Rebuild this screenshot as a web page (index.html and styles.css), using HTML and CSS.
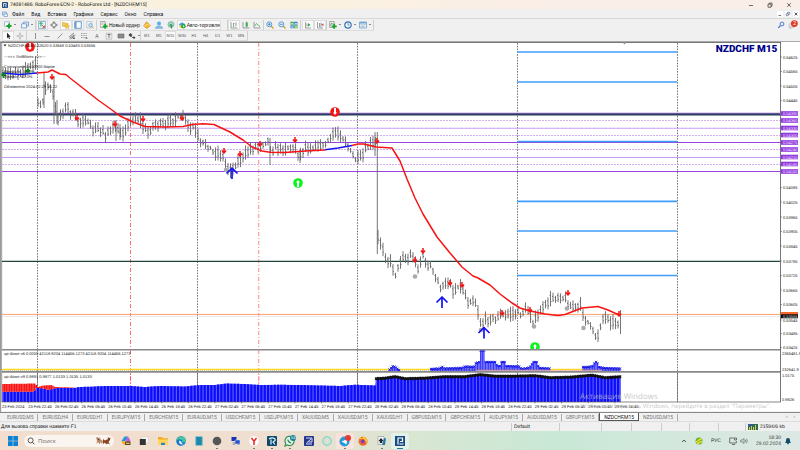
FILE: index.html
```html
<!DOCTYPE html>
<html lang="ru">
<head>
<meta charset="utf-8">
<title>NZDCHF,M15</title>
<link rel="stylesheet" href="styles.css">
</head>
<body>
<header class="title-bar">
  <svg class="i8" viewBox="0 0 8 8"><rect width="8" height="8" rx="1" fill="#1d4f86"/><path d="M2 6.5V2h3.6v2.4H3.6" fill="none" stroke="#fff"/><path d="M4 6.3h2.5" stroke="#fff" stroke-width=".8"/></svg>
  <span class="title-text">74081486: RoboForex-ECN-2 - RoboForex Ltd - [NZDCHF,M15]</span>
  <div class="window-buttons">
    <button aria-label="Свернуть"><svg class="i6" viewBox="0 0 6 6"><path d="M1 3.5h4" stroke="#333" stroke-width=".7"/></svg></button>
    <button aria-label="Восстановить"><svg class="i6" viewBox="0 0 6 6"><path d="M1 2.2h3v3H1zM2.2 2V1H5v3.2H4.200" fill="none" stroke="#333" stroke-width=".7"/></svg></button>
    <button aria-label="Закрыть"><svg class="i6" viewBox="0 0 6 6"><path d="M1.200 1.200l3.600 3.600M4.800 1.200L1.200 4.800" stroke="#333" stroke-width=".7"/></svg></button>
  </div>
</header>
<nav class="menu-bar">
  <svg class="i6" viewBox="0 0 6 6"><path d="M.5 1h4v3h-4z" fill="#cfe3f7" stroke="#4d86bf" stroke-width=".6"/><path d="M2 3h3.500v2.500H2z" fill="#fff" stroke="#4d86bf" stroke-width=".6"/></svg>
  <button>Файл</button><button>Вид</button><button>Вставка</button><button>Графики</button><button>Сервис</button><button>Окно</button><button>Справка</button>
  <div class="child-buttons">
    <button aria-label="Свернуть график"><svg class="i6" viewBox="0 0 6 6"><path d="M1.500 4.500h2.500" stroke="#555" stroke-width=".8"/></svg></button>
    <button aria-label="Восстановить график"><svg class="i6" viewBox="0 0 6 6"><path d="M1.300 2.700h2v2h-2zM2.500 2.500V1.300h2.300v2H3.500" fill="none" stroke="#5a6b85" stroke-width=".7"/></svg></button>
    <button aria-label="Закрыть график"><svg class="i6" viewBox="0 0 6 6"><path d="M1.600 1.600l2.800 2.800M4.400 1.600L1.600 4.400" stroke="#445" stroke-width=".9"/></svg></button>
  </div>
</nav>
<div class="toolbar toolbar-main">
  <div class="group g-files">
    <button aria-label="Новый график"><svg class="i8" viewBox="0 0 8 8"><path d="M.5.8h5v4.500h-5z" fill="#fff" stroke="#6d8fae" stroke-width=".6"/><path d="M5 2.500v5M2.500 5h5" stroke="#16a52a" stroke-width="1.900"/></svg><i></i></button>
    <button aria-label="Профили"><svg class="i8" viewBox="0 0 8 8"><path d="M2.500 1h5v4h-5z" fill="#d9e9f8" stroke="#5b8cbd" stroke-width=".7"/><path d="M.5 2.800h5V7h-5z" fill="#eef6fd" stroke="#5b8cbd" stroke-width=".7"/></svg><i></i></button>
  </div>
  <div class="group g-panels">
    <button class="on" aria-label="Обзор рынка"><svg class="i8" viewBox="0 0 8 8"><path d="M.5.5h7v7h-7z" fill="#e2f0fa" stroke="#6ba3ca" stroke-width=".7"/><path d="M3 1.500v4M1.500 3L3 1.500 4.500 3" fill="none" stroke="#1ba33a" stroke-width="1"/><path d="M4 4l2.500 2.500M6.500 4.500v2h-2" fill="none" stroke="#e0562d" stroke-width=".9"/></svg></button>
    <button aria-label="Окно данных"><svg class="i8" viewBox="0 0 8 8"><circle cx="4" cy="4" r="2.300" fill="none" stroke="#777" stroke-width=".8"/><path d="M4 .3v2.500M4 5.200v2.500M.3 4h2.500M5.200 4h2.500" stroke="#555" stroke-width=".8"/></svg></button>
    <button class="on" aria-label="Навигатор"><svg class="i8" viewBox="0 0 8 8"><path d="M.5 1.500h2l.7.8h2.600v3H.5z" fill="#f5cf57" stroke="#c99522" stroke-width=".5"/><path d="M5.200 3l.8 1.500 1.700.3-1.200 1.200.2 1.600-1.500-.8-1.500.8.2-1.600-1.200-1.200 1.700-.3z" fill="#ffd640" stroke="#c08c1c" stroke-width=".4"/></svg></button>
    <button class="on" aria-label="Терминал"><svg class="i8" viewBox="0 0 8 8"><path d="M.7.700h6.600v6.600H.7z" fill="#f8fbff" stroke="#4a87bd" stroke-width=".8"/><path d="M1 1h1.500v6H1z" fill="#62a0d8"/></svg></button>
    <button aria-label="Тестер стратегий"><svg class="i8" viewBox="0 0 8 8"><path d="M.7.500h5v6.500h-5z" fill="#eef4f8" stroke="#8fa9bb" stroke-width=".5"/><circle cx="4.500" cy="4.200" r="1.700" fill="#cfe5f6" stroke="#5588b0" stroke-width=".6"/><path d="M5.800 5.600l1.700 1.800" stroke="#d29a2a" stroke-width="1"/></svg></button>
  </div>
  <div class="group g-order">
    <button class="labelled"><svg class="i8" viewBox="0 0 8 8"><path d="M.7.500h4.500v6h-4.500z" fill="#fff" stroke="#777" stroke-width=".6"/><path d="M1.500 2h3M1.500 3.300h2" stroke="#777" stroke-width=".5"/><path d="M5.200 2.800v5M2.700 5.300h5" stroke="#16a52a" stroke-width="1.800"/></svg>Новый ордер</button>
    <button aria-label="Редактор"><svg class="i8" viewBox="0 0 8 8"><path d="M3.500.800l4 3.700-3.500 3L.500 5z" fill="#f4b92b" stroke="#b87e15" stroke-width=".5"/><path d="M1 5l3.500-1.500L7 4.500" stroke="#fde7a0" stroke-width=".7" fill="none"/></svg></button>
    <button aria-label="Сообщество"><svg class="i8" viewBox="0 0 8 8"><circle cx="4" cy="2.500" r="2" fill="#58aee6"/><path d="M.5 7.300c0-3 7-3 7 0z" fill="#8dc6ec" stroke="#3c86bd" stroke-width=".5"/></svg></button>
    <button aria-label="Сигналы"><svg class="i8" viewBox="0 0 8 8"><circle cx="4" cy="3.500" r="3" fill="#a9d8cb" stroke="#5fa894" stroke-width=".6"/><circle cx="4" cy="4.300" r="1.500" fill="#44a768"/><path d="M4.500 5v2.500" stroke="#359055"/></svg></button>
    <button class="labelled on"><svg class="i8" viewBox="0 0 8 8"><path d="M.5 3.500L4 1.200l3.500 2L4 5z" fill="#4c9ed8"/><path d="M1.500 4v2L4 7.500V5z" fill="#e6b92d"/><circle cx="5.500" cy="5.300" r="2.200" fill="#1ca638"/><path d="M5 4.200v2.200l1.700-1.100z" fill="#fff"/></svg>Авто-торговля</button>
  </div>
  <div class="group g-charts">
    <button class="on" aria-label="Бары"><svg class="i8" viewBox="0 0 8 8"><path d="M1 1v6h6.500M3.500 2v4M3.500 2.500h1M6 1.500V5M5.500 5H6" fill="none" stroke="#6f8a75" stroke-width=".8"/></svg></button>
    <button aria-label="Свечи"><svg class="i8" viewBox="0 0 8 8"><path d="M1 1v6h6.500M4.700.5v6" fill="none" stroke="#777" stroke-width=".7"/><path d="M3.700 1.500h2v4h-2z" fill="#28b34a"/></svg></button>
    <button aria-label="Линия"><svg class="i8" viewBox="0 0 8 8"><path d="M1 1v6h6.500" fill="none" stroke="#777" stroke-width=".7"/><path d="M1.500 5l2-2.500 2 2 1.500 1" fill="none" stroke="#34ac50" stroke-width=".8"/></svg></button>
  </div>
  <div class="group g-zoom">
    <button aria-label="Приблизить"><svg class="i8" viewBox="0 0 8 8"><path d="M4.800 4.800l2.700 2.700" stroke="#d2a02e" stroke-width="1.400"/><circle cx="3.300" cy="3.300" r="2.500" fill="#e2f2ff" stroke="#3f86c5" stroke-width=".8"/><path d="M2 3.300h2.600M3.300 2v2.600" stroke="#2572ba" stroke-width=".8"/></svg></button>
    <button aria-label="Отдалить"><svg class="i8" viewBox="0 0 8 8"><path d="M4.800 4.800l2.700 2.700" stroke="#d2a02e" stroke-width="1.400"/><circle cx="3.300" cy="3.300" r="2.500" fill="#e2f2ff" stroke="#3f86c5" stroke-width=".8"/><path d="M2 3.300h2.600" stroke="#2572ba" stroke-width=".8"/></svg></button>
    <button aria-label="Окна плиткой"><svg class="i8" viewBox="0 0 8 8"><path d="M.5.800h3.300v3H.5zM4.200 4.200h3.300v3H4.200z" fill="#39a84a"/><path d="M4.200.800h3.300v3H4.200zM.5 4.200h3.300v3H.5z" fill="#3978c8"/><path d="M1.200 2.300h2v1h-2zM5 2.300h2v1H5zM1.200 5.600h2v1h-2zM5 5.600h2v1H5z" fill="#fff"/></svg></button>
  </div>
  <div class="group g-scroll">
    <button class="on" aria-label="Автопрокрутка"><svg class="i8" viewBox="0 0 8 8"><path d="M1.500 1v6H7M3 2.500v3" fill="none" stroke="#777" stroke-width=".7"/><path d="M4 2v3.500L6.500 4z" fill="#23ad42"/></svg></button>
    <button class="on" aria-label="Сдвиг графика"><svg class="i8" viewBox="0 0 8 8"><path d="M1.500 1v6H7M3.500 2v4" fill="none" stroke="#777" stroke-width=".7"/><path d="M5 1.500v5" stroke="#4b7ba8" stroke-width=".7"/><path d="M7.500 2.300v3L5.200 3.800z" fill="#d0562e"/></svg></button>
  </div>
  <div class="group g-tools">
    <button aria-label="Индикаторы"><svg class="i8" viewBox="0 0 8 8"><path d="M.7.500h4.500v6h-4.500z" fill="#e7f2e4" stroke="#777" stroke-width=".6"/><path d="M1.200 5l1.500-3 1 1.500" fill="none" stroke="#555" stroke-width=".6"/><path d="M5.200 2.800v5M2.700 5.300h5" stroke="#16a52a" stroke-width="1.800"/></svg><i></i></button>
    <button aria-label="Периоды"><svg class="i8" viewBox="0 0 8 8"><circle cx="4" cy="4" r="3.200" fill="#f4faff" stroke="#2f74b8" stroke-width="1.200"/><path d="M4 2v2.200h1.500" fill="none" stroke="#444" stroke-width=".6"/></svg><i></i></button>
    <button aria-label="Шаблоны"><svg class="i8" viewBox="0 0 8 8"><path d="M.5 1h7v6h-7z" fill="#e5f0fa" stroke="#6a96bd" stroke-width=".7"/><path d="M.5 1h7v1.500h-7z" fill="#6fa5d2"/><path d="M1.500 4l1-.7 1.500 1 2.500-1M1.500 5.700h4" fill="none" stroke="#7f9db5" stroke-width=".6"/></svg><i></i></button>
  </div>
  <div class="toolbar-right">
    <button aria-label="Поиск по сайту"><svg class="i8" viewBox="0 0 8 8"><circle cx="5" cy="3" r="1.900" fill="none" stroke="#3c6fd0" stroke-width=".9"/><path d="M3.500 4.500L1.300 6.800" stroke="#3c6fd0" stroke-width="1.100"/></svg></button>
    <button aria-label="Уведомления" class="notice"><svg class="i10" viewBox="0 0 10 10"><path d="M1 5c0-3 5-3 5 0v2.500H3.500L2.500 9V7.500H1z" fill="#ddd" stroke="#aaa" stroke-width=".5"/><circle cx="6.400" cy="3.600" r="3.400" fill="#e13a20"/><text x="5.300" y="5.400" fill="#fff" font-size="5">2</text></svg></button>
  </div>
</div>
<div class="toolbar toolbar-draw">
  <div class="group g-cursor">
    <button class="on" aria-label="Курсор"><svg class="i8" viewBox="0 0 8 8"><path d="M3 .8v5.400l1.300-1.100.8 2 .9-.4-.8-1.900h1.500z" fill="#222"/></svg></button>
    <button aria-label="Перекрестие"><svg class="i8" viewBox="0 0 8 8"><path d="M4 .7v2.600M4 4.700v2.600M.7 4h2.600M4.700 4h2.600" stroke="#777" stroke-width=".7"/></svg></button>
  </div>
  <div class="group g-draw">
    <button aria-label="Вертикальная линия"><svg class="i8" viewBox="0 0 8 8"><path d="M4.500 1v6" stroke="#666" stroke-width=".7"/></svg></button>
    <button aria-label="Горизонтальная линия"><svg class="i8" viewBox="0 0 8 8"><path d="M1.500 4.500h5" stroke="#666" stroke-width=".7"/></svg></button>
    <button aria-label="Трендовая линия"><svg class="i8" viewBox="0 0 8 8"><path d="M1.500 6.500l5-5" stroke="#666" stroke-width=".7"/></svg></button>
    <button aria-label="Канал"><svg class="i8" viewBox="0 0 8 8"><path d="M1 5l5-4M2.500 7l5-4M1.500 6.500L6 3" stroke="#666" stroke-width=".8"/><path d="M4.800 5.500h2v1.500h-2z" fill="#555"/></svg></button>
    <button aria-label="Фибоначчи"><svg class="i8" viewBox="0 0 8 8"><path d="M1 1.500h6M1 3.500h6M1 5.500h4" stroke="#777" stroke-width=".7" stroke-dasharray="1 .6"/><path d="M5.500 5h1.800v2H5.500z" fill="#888"/></svg></button>
    <button>A</button>
    <button aria-label="Метка"><svg class="i8" viewBox="0 0 8 8"><path d="M1.200 1.200h5.600v6H1.200z" fill="none" stroke="#888" stroke-width=".6" stroke-dasharray="1 .5"/><path d="M2.500 2.500h3M4 2.500V6" stroke="#555" stroke-width=".8"/></svg></button>
    <button aria-label="Прямоугольник"><svg class="i8" viewBox="0 0 8 8"><path d="M1 2h6v4H1z" fill="#8b8b8b" stroke="#666" stroke-width=".6"/></svg></button>
    <button aria-label="Стрелки"><svg class="i8" viewBox="0 0 8 8"><path d="M.5 3l2-2 2 2-2 2zM4.500 5.500l1.500-1.300 1.500 1.300L6 7z" fill="#444"/><path d="M3 4l2 2" stroke="#444" stroke-width=".7"/></svg><i></i></button>
  </div>
  <div class="group g-periods">
    <button>M1</button><button>M5</button><button class="on">M15</button><button>M30</button><button>H1</button><button>H4</button><button>D1</button><button>W1</button><button>MN</button>
  </div>
</div>
<main class="chart-window">
  <svg id="chart" class="chart" viewBox="0 42 800 370" role="img" aria-label="NZDCHF M15"></svg>
</main>
<nav class="chart-tabs">
  <button>EURUSD,M5</button><button>EURUSD,H4</button><button>EURUSD,H1</button><button>EURJPY,M15</button><button>EURCHF,M15</button><button>EURAUD,M15</button><button>USDCHF,M15</button><button>USDJPY,M15</button><button>XAUUSD,M5</button><button>XAUUSD,M15</button><button>XAUUSD,H1</button><button>GBPUSD,M15</button><button>GBPCHF,M15</button><button>AUDJPY,M15</button><button>AUDUSD,M15</button><button>GBPJPY,M15</button><button class="active">NZDCHF,M15</button><button>NZDUSD,M15</button>
  <span class="tab-scroll"><b>‹</b><b>›</b></span>
</nav>
<footer class="status-bar">
  <span class="hint">Для вызова справки нажмите F1</span>
  <div class="status-cells"><span>Default</span><span></span><span></span><span></span><span></span><span></span><span></span>
  <span class="traffic"><svg class="i10" viewBox="0 0 10 6"><path d="M0 0h10v6H0z" fill="#2e6b4a"/><path d="M0 0h5v3H0z" fill="#315c96"/><path d="M1 6V3h1v3zM3 6V2h1v4zM5 6V3h1v3zM7 6V1h1v5z" fill="#d4cf55"/></svg>21594/6 kb</span></div>
</footer>
<footer class="taskbar">
  <button class="start" aria-label="Пуск"><svg class="i10" viewBox="0 0 10 10"><path d="M0 0h4.700v4.700H0zM5.300 0H10v4.700H5.300zM0 5.300h4.700V10H0zM5.300 5.300H10V10H5.300z" fill="#0b83d4"/></svg></button>
  <label class="search"><svg class="i8" viewBox="0 0 8 8"><circle cx="3.600" cy="3.400" r="2.500" fill="none" stroke="#333" stroke-width=".8"/><path d="M5.500 5.300L7.300 7.200" stroke="#333" stroke-width=".9"/></svg><input type="text" placeholder="Поиск" aria-label="Поиск">
    <svg class="pets" viewBox="0 0 16 9"><path d="M1 2l1-1 1.500 1L5 1.500l.5 2L8 5l-1 3-1.500-2-1 2.500L3 6 1.500 8 2 4z" fill="#b98a6b"/><path d="M8 3l2 1.500L13 3l-.3-2L14 2l1.500-.5L15 4l-1.500 2L15 8.500l-2-1-2 .8-1-1.800L8 8V5z" fill="#8a4320"/><circle cx="3.500" cy="3.500" r=".7" fill="#56331f"/><circle cx="14" cy="3" r=".5" fill="#222"/></svg></label>
  <div class="apps">
    <button aria-label="Copilot"><svg class="i10" viewBox="0 0 10 10"><path d="M3.500.5h3.500L5.500 4 2 6.500.5 5z" fill="#2f8fe0"/><path d="M7 .5l2.500 4L7 8 5 5z" fill="#c65ad3"/><path d="M.5 5H4l1 3.500H2z" fill="#f0b429"/><path d="M4 5.500h5.500V9H4z" fill="#5d461a"/><path d="M5 7.300h3.600" stroke="#ffe18a"/></svg></button>
    <button aria-label="Представление задач"><svg class="i10" viewBox="0 0 10 10"><path d="M3 1h6.500v6H3z" fill="#f7f7f7" stroke="#bbb" stroke-width=".3"/><path d="M.8 3h6v6h-6z" fill="#333"/></svg></button>
    <button aria-label="Проводник"><svg class="i10" viewBox="0 0 10 10"><path d="M0 1h4l1 1.200h5v6.300H0z" fill="#f2ae23"/><path d="M0 3.500h10V9H0z" fill="#ffd65a"/><path d="M3 6.800h4V9H3z" fill="#3183c8"/></svg></button>
    <button aria-label="Edge"><svg class="i10" viewBox="0 0 10 10"><circle cx="5" cy="5" r="4.800" fill="#1478ca"/><path d="M.4 4C2-1 9.500-.5 9.800 5c0 2-3 2-3.500.8C7 3.500 2.500 2 .4 5z" fill="#47c89c"/><path d="M3.500 4.500C2 7.500 5 9.200 8.500 8c-2 .2-3.500-1-3-2.300z" fill="#e8f6fb"/></svg></button>
    <button aria-label="Блокнот"><svg class="i10" viewBox="0 0 10 10"><path d="M1.500.500h7v9h-7z" fill="#2aa7c7"/><path d="M2.500 2h5M2.500 4h5M2.500 6h5M2.500 8h5" stroke="#114e75" stroke-width=".7"/></svg></button>
    <button aria-label="Приложение" class="run"><svg class="i10" viewBox="0 0 10 10"><circle cx="5" cy="5" r="4.300" fill="#555"/></svg></button>
    <button aria-label="Удалённый доступ"><svg class="i10" viewBox="0 0 10 10"><path d="M.5 1h5v4h-5z" fill="#1535b8"/><path d="M4 4h5v4H4z" fill="#2552d5" stroke="#d5ddef" stroke-width=".5"/><path d="M2 6.500h2v2H2zM6 8.500h3" stroke="#999" fill="#bbb" stroke-width=".6"/></svg></button>
    <button aria-label="Яндекс" class="run"><svg class="i10" viewBox="0 0 10 10"><circle cx="5" cy="5" r="4.800" fill="#fff"/><path d="M2.500 2L5 5.200 7.500 2M5 5v4" fill="none" stroke="#ef2525" stroke-width="1.500"/></svg></button>
    <button aria-label="R" class="run"><svg class="i10" viewBox="0 0 10 10"><rect width="10" height="10" rx="1" fill="#0b496e"/><path d="M2 3c3-2 7-1 6 1.500L6 6l2 2.500M4 3.500v5" fill="none" stroke="#e6f4fa" stroke-width="1.200"/></svg></button>
    <button aria-label="WhatsApp" class="run"><svg class="i12" viewBox="0 0 12 12"><path d="M1 11l.8-2.500A4.600 4.600 0 1 1 3.500 10z" fill="#e6f5e9" stroke="#3e8d5b" stroke-width="1.200"/><path d="M3.700 4.500c.5 2 1.800 3.200 3.500 3.500" fill="none" stroke="#3e8d5b" stroke-width="1.200"/><circle cx="9" cy="3" r="3" fill="#168393"/><text x="7" y="4.300" fill="#fff" font-size="4">54</text></svg></button>
    <button aria-label="Терминал"><svg class="i10" viewBox="0 0 10 10"><rect width="10" height="10" rx="1" fill="#27348c"/><path d="M2 2h6v4H4.500M2 8h6M2.500 7L7 3" fill="none" stroke="#d7def6" stroke-width="1"/></svg></button>
    <button aria-label="Браузер"><svg class="i10" viewBox="0 0 10 10"><ellipse cx="5" cy="5" rx="4.200" ry="4.300" fill="none" stroke="#5fd0cd" stroke-width="1"/><ellipse cx="5" cy="5" rx="2" ry="3.300" fill="none" stroke="#9fe2db" stroke-width=".6"/></svg></button>
    <button aria-label="Telegram" class="alert run"><svg class="i12" viewBox="0 0 12 12"><circle cx="5.500" cy="6.500" r="5" fill="#229bd8"/><path d="M2.500 6.500L8.500 4 7.300 9.500 5.300 8z" fill="#fff"/><circle cx="9" cy="3" r="3" fill="#e83a32"/></svg></button>
    <button aria-label="Firefox"><svg class="i10" viewBox="0 0 10 10"><circle cx="5" cy="5.300" r="4.500" fill="#f36b28"/><path d="M1 3l1-2 1.500 1.500L6 .5c3 1.500 4 5 2.500 6.500L6 3z" fill="#ffc52e"/><circle cx="4.800" cy="5.500" r="2" fill="#813dc0"/></svg></button>
    <button aria-label="Пасьянс" class="run"><svg class="i10" viewBox="0 0 10 10"><path d="M1 .5h6v8H1z" fill="#f7f7f7" stroke="#71818b" stroke-width=".5"/><path d="M4 2l2.500 3-1.800.6.8 1.400h-3l.8-1.400L1.500 5z" fill="#222"/><path d="M7 2l2 .5L8 9H5z" fill="#287aaa"/></svg></button>
    <button aria-label="RoboForex" class="current"><svg class="i10" viewBox="0 0 10 10"><rect width="10" height="10" fill="#164c7f"/><path d="M3 8.500V2h4.500v3.500H5M4.500 8h4" fill="none" stroke="#fff" stroke-width="1.200"/></svg></button>
  </div>
  <div class="tray">
    <svg class="i6" viewBox="0 0 6 6"><path d="M1 4l2-2 2 2" fill="none" stroke="#333" stroke-width=".8"/></svg>
    <svg class="i8" viewBox="0 0 8 8"><circle cx="4" cy="4" r="3.500" fill="#65b530"/><path d="M1 5c2 0 2-3 5.500-3M2 6.500c3 0 2-2 5-2" fill="none" stroke="#f9df31" stroke-width="1.300"/></svg>
    <span>РУС</span>
    <div class="devices"><svg class="i8" viewBox="0 0 8 8"><path d="M7.300 4v2H.7V1H5M3 7.500h3M5.500 1h2v2h-2z" fill="none" stroke="#444" stroke-width=".7"/></svg><svg class="i8" viewBox="0 0 8 8"><path d="M.7 3h1.500L4 1.500v5L2.200 5H.7zM5.200 2.800q1 1.200 0 2.400M6.500 1.800q1.600 2.200 0 4.400" fill="none" stroke="#555" stroke-width=".6"/></svg></div>
    <div class="clock"><span>18:30</span><span>29.02.2024</span></div>
    <svg class="i8 bell" viewBox="0 0 8 8"><path d="M1 6l1-1.500V3a2 2 0 0 1 4 0v1.500L7 6z" fill="#124c68"/><path d="M3 6.700h2" stroke="#124c68"/></svg>
  </div>
</footer>
<script src="chart.js"></script>
</body>
</html>
```
FILE: styles.css
```css
* { box-sizing: border-box; }
body { margin: 0; min-height: 100vh; display: flex; flex-direction: column; background: #f0f0f0; color: #111; font: 5px/6px "Liberation Sans", Arial, sans-serif; text-rendering: geometricPrecision; }
button { display: flex; align-items: center; justify-content: center; margin: 0; padding: 0; border: 0; background: none; color: inherit; font: inherit; }
svg { display: block; flex: none; }
.i6 { width: 6px; height: 6px; }
.i8 { width: 8px; height: 8px; }
.i10 { width: 10px; height: 10px; }
.i12 { width: 12px; height: 12px; }

.title-bar { display: flex; align-items: center; height: 9px; padding: 0 8px 0 2px; gap: 2px; background: linear-gradient(90deg, #f8f1de, #fbf1e0 40%, #faeee8 70%); font-family: Roboto, sans-serif; }
.title-bar > .i8 { width: 6px; height: 6px; }
.window-buttons { display: flex; gap: 13px; margin-left: auto; }

.menu-bar { display: flex; align-items: center; height: 9px; padding: 0 1px 0 2px; gap: 7px; font-family: Roboto, sans-serif; }
.menu-bar > svg { margin-right: -3px; }
.child-buttons { display: flex; gap: 2px; margin-left: auto; }
.child-buttons button { background: #fff; }

.toolbar { display: flex; align-items: center; padding-left: 2px; }
.toolbar-main { height: 13px; border-top: 1px solid #d9d9d9; }
.toolbar-draw { height: 11px; border-bottom: 1px solid #aaa; }
.group { display: flex; align-items: center; height: 11px; border-right: 1px solid #cfcfcf; border-bottom: 1px solid #ddd; }
.toolbar-draw .group { height: 10px; }
.group button { flex: 1; height: 10px; color: #555; }
.group .on { background: #fafafa; outline: 1px solid #ddd; outline-offset: -1px; }
.group i { border: 1px solid transparent; border-top-color: #222; border-bottom: 0; margin-left: 2px; }
.group .labelled { flex: none; gap: 1px; padding: 0 1px; color: #111; }
.g-files { width: 34px; }
.g-panels { width: 61px; }
.g-order { width: 129px; margin-left: 2px; }
.g-order button { flex: 0 0 12px; }
.g-charts { width: 36px; }
.g-zoom { width: 37px; }
.g-scroll { width: 26px; padding-left: 1px; }
.g-tools { width: 47px; }
.g-cursor { width: 25px; }
.g-draw { width: 114px; padding-left: 2px; }
.g-periods { width: 107px; }
.g-periods button { font-size: 4px; }
.toolbar-right { display: flex; align-items: center; gap: 3px; margin-left: auto; padding-right: 2px; }
.toolbar-right svg { overflow: visible; }

.chart-window { background: #f0f0f0; }
.chart { width: 100%; height: auto; }
.chart text { white-space: pre; }

.chart-tabs { display: flex; align-items: center; height: 9px; padding-left: 3px; border-top: 1px solid #888; color: #777; font-family: Roboto, sans-serif; }
.chart-tabs button { flex: 1 1 auto; height: 7px; border-right: 1px solid #aaa; }
.chart-tabs .active { height: 8px; background: #fff; border: 1px solid #555; border-top: 0; color: #111; }
.tab-scroll { display: flex; justify-content: flex-end; gap: 6px; width: 122px; padding-right: 5px; }

.status-bar { display: flex; align-items: center; justify-content: space-between; height: 10px; padding-left: 1px; border-top: 1px solid #ddd; }
.status-cells { display: grid; grid-template-columns: 48fr 42fr 30fr 30fr 28fr 29fr 27fr 55fr; width: 289px; }
.status-cells > span { height: 8px; border-left: 1px solid #ccc; padding: 1px 0 0 2px; }
.status-cells .traffic { display: flex; gap: 2px; }
.traffic svg { height: 6px; }

.taskbar { display: flex; align-items: center; height: 19px; padding: 0 8px; background: linear-gradient(90deg, #f2ddce, #efdfd0 35%, #d8e6d2 52%, #c9e8d6 70%, #d6e8df 88%, #dde8e4); color: #333; }
.search { display: flex; align-items: center; width: 90px; height: 12px; margin-left: 6px; padding: 0 3px; gap: 3px; border-radius: 6px; background: #fbf5f0; }
.search input { flex: 1; min-width: 0; padding: 0; border: 0; outline: 0; background: none; color: #555; font: 6px "Open Sans", sans-serif; }
.search input::placeholder { color: #666; opacity: 1; }
.pets { width: 16px; height: 9px; }
.apps { display: grid; grid-template-columns: repeat(16, 1fr); width: 292px; margin-left: 3px; }
.apps button { height: 16px; border-radius: 2px; }
.apps .run { background: linear-gradient(#777, #777) center bottom / 2px 1px no-repeat; }
.apps .alert { background-color: #fbe2dc; }
.apps .current { background: linear-gradient(#167a9c, #167a9c) center bottom / 6px 1px no-repeat #e3f1e8; }
.tray { display: flex; align-items: center; gap: 8px; margin-left: auto; }
.devices { display: flex; gap: 3px; }
.clock { display: flex; flex-direction: column; align-items: flex-end; }
.bell { margin-left: -5px; }
```
FILE: chart.js
```js
const NS = "http://www.w3.org/2000/svg";
const chart = document.getElementById("chart");

function add(tag, attrs, text) {
  const el = document.createElementNS(NS, tag);
  for (const k in attrs) el.setAttribute(k, attrs[k]);
  if (text) el.textContent = text;
  chart.appendChild(el);
  return el;
}
function line(x1, y1, x2, y2, stroke, width = 1, dash = "none") {
  add("line", { x1, y1, x2, y2, stroke, "stroke-width": width, "stroke-dasharray": dash });
}
function path(d, stroke, width) {
  add("path", { d, stroke, "stroke-width": width, fill: "none", "stroke-linejoin": "round" });
}
function label(x, y, text, size = 4, fill = "#222", extra = {}) {
  add("text", { x, y, fill, "font-size": size, ...extra }, text);
}
function at(points, x) {
  for (let i = 1; i < points.length; i++) {
    const [x0, y0] = points[i - 1], [x1, y1] = points[i];
    if (x <= x1) return y0 + (y1 - y0) * (x - x0) / (x1 - x0);
  }
  return points[points.length - 1][1];
}
let seed = 7;
function rnd() { seed = (seed * 16807) % 2147483647; return seed / 2147483647; }

// Frame
add("rect", { x: 2, y: 42, width: 798, height: 369, fill: "#fff" });
line(0.5, 42, 0.5, 412, "#999");
line(1, 42.5, 781, 42.5, "#777");
line(1.7, 42, 1.7, 402, "#777", 0.7);

// Session separators
function separators(top) {
  [37.5, 197.5, 357.5, 517.5, 677.5].forEach(x => line(x, top, x, 402, "#666", 0.9, "1.6 1.2"));
  line(130.5, top, 130.5, 402, "#ff5c5c", 0.9, "4 2 1 2");
  line(258.7, top, 258.7, 402, "#ff9c9c", 1.2, "4 2 1 2");
}
separators(43);

// Price levels
line(2, 113.300, 780, 113.300, "#6a35a8");
line(2, 114.600, 780, 114.600, "#25405c", 1.600);
[120.500, 135.500, 149.500, 164.500].forEach(y => line(2, y, 780, y, "#c79bea", 0.8, "2 1"));
[128.300, 157.500].forEach(y => line(2, y, 780, y, "#c99bf2", 1.100));
[142.500, 171.500].forEach(y => line(2, y, 780, y, "#9444dc", 1.200));
line(2, 261.400, 780, 261.400, "#24453f", 1.200);
line(2, 314.400, 780, 314.400, "#ffa06c", 1);
line(2, 316.300, 780, 316.300, "#e7e7e7");
[52, 82, 141.500, 201.400, 231, 275.500].forEach(y => line(517, y, 677, y, "#3f9dfb", 1.700));

// Price bars
const price = [[2,76],[10,74],[20,71],[26,69],[32,65],[36,62],[37.5,103],[42,106],[44,92],[47,84],[51,90],[54,97],[56,115],[58,118],[62,112],[68,107],[72,114],[78,122],[84,118],[90,127],[95,131],[100,129],[105,134],[110,131],[115,128],[120,135],[125,130],[130,122],[135,118],[140,120],[145,130],[149,133],[153,125],[160,124],[166,127],[170,119],[178,118],[184,117],[190,129],[194,127],[200,143],[207,144],[213,152],[218,153],[223,157],[227,168],[232,169],[237,163],[242,158],[247,153],[252,148],[257,146],[262,144],[268,140],[272,152],[276,148],[282,149],[290,147],[296,150],[300,156],[304,147],[310,149],[316,146],[324,145],[330,139],[334,133],[340,134],[346,142],[351,153],[356,160],[362,158],[366,150],[370,145],[375,143],[376.500,142],[378,238],[382,244],[385,257],[392,264],[395,275],[399,265],[402,256],[408,260],[411,254],[414,260],[418,268],[423,255],[426,265],[430,265],[436,278],[441,288],[445,285],[450,282],[454,294],[458,285],[462,288],[468,302],[474,299],[478,312],[481,325],[486,320],[490,318],[496,319],[500,315],[504,316],[508,314],[515,313],[520,314],[526,310],[530,314],[534,323],[540,312],[545,306],[550,300],[556,297],[561,296],[566,300],[570,307],[575,307],[580,305],[584,316],[590,325],[595,336],[598,335],[602,319],[607,316],[612,323],[618,322]];
let bars = "";
for (let x = 3; x < 619; x += 2.500) {
  const y = at(price, x) + (rnd() - 0.5) * 4;
  const up = 2 + rnd() * 6, down = 2 + rnd() * 6;
  bars += `M${x} ${y - up}V${y + down}M${x - 1} ${y - up * 0.4}h1M${x} ${y + down * 0.4}h1`;
}
path(bars + "M377.300 132V254M620.500 310V334M44 72V108M54 76V124M57 100V124M116 120V141M120 124V140M270 138V165M300 150V163M375 132V156", "#666", 0.9);

// Moving average
path("M2 73L20 74.500 37 73", "#1616f0", 1.500);
path("M37 73L48 72 52 70 60 74 66 74.500 70 78 98 100 112 110 120 116 133 122 145 126.500 165 127 183 126.500 192 124.500 203 123.800 214 124.500 230 132 243 140 252 147 262 151 270 152.300 285 152.500 305 151 325 150", "#f81414", 1.500);
path("M325 149.800L338 148 352 145.500", "#1616f0", 1.500);
path("M352 145.500L358 144 364 144 376 147 392 148 400 161 407 179 415 198 423 214 437 237 450 253 462 267 473 276 478 278 490 285 500 294 512 303 520 308 530 311 545 314 558 315.500 565 314.500 582 308 598 306.500 608 310 619 315", "#f81414", 1.500);

// Turning points and signals
[[226,170],[415,276.500],[481,330],[534,326.500],[567,308.500],[583.500,328]].forEach(([cx, cy]) => add("circle", { cx, cy, r: 2.300, fill: "#aaa" }));
[[52,77],[77,118],[115,124],[143,119],[182,118],[224,151],[240,154],[260,144],[295,140],[377,141],[415,260],[423,251],[450,283],[462,285],[502,313],[530,310],[568,293],[619,314]].forEach(([x, y]) => path(`M${x} ${y - 3}v5M${x - 2} ${y - 0.5}l2 2.500 2-2.500`, "#f81414", 1.500));
[[28,71],[3.500,75]].forEach(([x, y]) => path(`M${x} ${y + 3}v-5M${x - 2} ${y + 0.5}l2-2.500 2 2.500`, "#078b16", 1.500));
[[232,173],[442,302],[484,332.500]].forEach(([x, y]) => path(`M${x} ${y + 6}v-10M${x - 5.500} ${y + 0.500}L${x} ${y - 5}l5.500 5.500`, "#1212f5", 1.700));
[[30,47,"#f81414",1],[335,112,"#f81414",1],[298,183,"#0af51e",-1],[535,347,"#0af51e",-1]].forEach(([x, y, fill, dir]) => {
  add("circle", { cx: x, cy: y, r: 4.800, fill });
  add("path", { d: `M${x - 1} ${y - 4 * dir}h2v${4.500 * dir}h1l-2 ${2.500 * dir}-2 ${-2.500 * dir}h1z`, fill: "#fff" });
});

// Indicator panels
add("rect", { x: 2, y: 349, width: 779, height: 22.500, fill: "#fff" });
separators(350);
line(2, 369.500, 620, 369.500, "#ffd91a", 1.400);
line(2, 370.700, 620, 370.700, "#8b9bdd", 0.600, "1 1");
const volume = [[389,370],[391,368],[393,366],[396,367.500],[399,370],[400,371],[430,371],[431,369],[440,368.500],[442,366.500],[444,368.500],[462,368],[465,366.500],[474,367],[476,363],[479.500,362],[480,350.500],[485,350.500],[485.500,362],[496,362],[497,366],[500,366],[501,362],[505,362],[506,366],[520,366.500],[521,369],[528,368],[531,366],[533,362],[537,362],[539,368],[550,368.500],[551,371],[582,371],[583,367],[588,367],[593,366],[595,362],[597,362],[599,367],[602,367.500],[603,368],[620,368.500]];
let blue = "", marks = "";
for (let x = 389.500; x < 621; x += 1.600) {
  const y = at(volume, x);
  if (y > 370.500) continue;
  blue += `M${x} ${y}V371`;
  marks += `M${x - 1.100} ${y - 1.100}l2.200 2.200M${x + 1.100} ${y - 1.100}l-2.200 2.200`;
}
path(blue, "#3535ff", 1.300);
path(marks, "#1212e8", 0.900);
line(476, 370.300, 602, 370.300, "#f4b9a6", 0.900);

const trend = [[2,391.700],[34,391.700],[36,388],[42,388.300],[48,390],[53,389],[56,388],[74,388],[80,387],[90,386.700],[105,386],[130,386],[145,387],[160,386],[185,386.500],[200,385],[215,385],[226,383.500],[245,384],[260,385],[280,384.800],[300,385],[340,386],[355,384.700],[375,385.500],[376,378],[385,377.500],[395,376],[405,378],[425,377.500],[445,376],[465,376],[480,374],[495,375.500],[515,375.500],[535,375],[550,377],[570,376.500],[592,374.500],[605,377],[621,376]];
const upper = [[2,384],[35,383.500],[38,387],[43,385.500],[52,385],[55,387],[73,387.500],[76,388]];
let base = "", red = "", band = "";
for (let x = 3; x < 621; x += 1.667) {
  const y = at(trend, x);
  if (Math.round(x / 1.667) % 2) base += `M${x} ${y}V402`;
  if (x < 75) red += `M${x} ${at(upper, x)}V${y}`;
  if (x > 376) band += `M${x - 1.200} ${y - 0.500}l2.400 2.400M${x + 1.200} ${y - 0.500}l-2.400 2.400`;
}
const area = trend.map(([x, y]) => `${x} ${y}`).join("L");
add("path", { d: `M2 402L${area}V402z`, fill: "#6464ff" });
path(base, "#0c0cfa", 2.300);
path(red, "#f81414", 1.500);
path(band, "#111", 1.500);

line(2, 349.700, 781, 349.700, "#888", 1.600);
line(2, 371.900, 781, 371.900, "#888", 1.600);
line(2, 402, 781, 402, "#555", 0.700);
line(780.500, 42, 780.500, 402, "#666", 0.900);

// Chart captions
add("path", { d: "M3.500 44.500h3l-1.500 2z", fill: "#222" });
label(8, 47.200, "NZDCHF,M15 0.53520 0.53568 0.53483 0.53556", 4);
label(4, 57.700, "---<<< SniBforex >>>---", 4);
label(4, 67.700, "Статистика за 10000 баров");
label(4, 72.500, "Прибыль: 58.2%");
label(4, 77.500, "Профит: 42.0%");
label(4, 87.500, "Обновлено 2024.02.29 15:22");
label(4, 355.300, "up-down-v6 0.0000 42118.9204 114456.1273 42118.9204 114456.1273");
label(4, 377.500, "up-down-v9 0.9891 0.9877 1.0133 1.0135 1.0133");
label(746.500, 52, "NZDCHF M15", 10, "#00008b", { "text-anchor": "middle", "font-weight": 900, "font-family": "Roboto" });

// Price scale
[["0.54625",57],["0.54565",71.500],["0.54505",86],["0.54445",100.500],["0.54085",187.500],["0.54025",202],["0.53965",217],["0.53905",231.500],["0.53845",246],["0.53785",261],["0.53725",275.500],["0.53665",290],["0.53605",304.500],["0.53545",320],["0.53485",333.500],["0.53425",347.500]].forEach(([t, y]) => { line(780, y, 782, y, "#666", 0.600); label(783, y + 1.500, t); });
[["0.54390",113.500],["0.54360",120.500],["0.54330",128],["0.54300",135],["0.54270",142.500],["0.54240",149.500],["0.54210",157],["0.54180",164],["0.54150",171.500]].forEach(([t, y]) => { add("rect", { x: 781, y: y - 2.300, width: 17, height: 4.600, fill: "#9138de" }); label(783, y + 1.500, t, 4, "#f3e4ff"); });
add("rect", { x: 781, y: 312, width: 17, height: 4, fill: "#f56a2a" });
add("rect", { x: 781, y: 314.300, width: 17, height: 4, fill: "#080808" });
label(783, 317.700, "0.53556", 4, "#ddd");
label(782, 354.700, "2365481.9");
label(782, 370.700, "232641.9");
label(782, 377.200, "1.0175");
label(782, 401, "0.9826");
add("path", { d: "M622.500 42.500h4l-2 2z", fill: "#999" });

// Time scale
label(2, 408, "23 Feb 2024");
const hours = ["02:45", "06:45", "10:45", "14:45", "18:45", "22:45"];
const dates = ["23 Feb 22:45"];
["26", "27", "28"].forEach(d => hours.forEach(h => dates.push(`${d} Feb ${h}`)));
hours.slice(0, 4).forEach(h => dates.push(`29 Feb ${h}`));
dates.forEach((t, i) => {
  const x = 28.300 + i * 26.660;
  line(x, 402, x, 403.500, "#555", 0.600);
  label(x, 408, t, 4, "#111");
});

// Activation notice
label(580, 398.500, "Активация Windows", 8, "#b8b8b8", { "font-family": "Open Sans", "fill-opacity": 0.800 });
label(580, 407.500, "Чтобы активировать Windows, перейдите в раздел \"Параметры\".", 6, "#b8b8b8", { "font-family": "Open Sans", "fill-opacity": 0.800 });
```
